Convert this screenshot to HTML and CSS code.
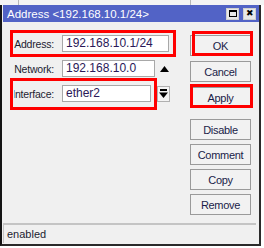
FILE: index.html
```html
<!DOCTYPE html>
<html>
<head>
<meta charset="utf-8">
<link rel="stylesheet" href="styles.css">
</head>
<body>
<div class="topstrip"><span class="tl a"></span><span class="tl b"></span></div>
<div class="window">
  <div class="titlebar">
    <span class="title">Address &lt;192.168.10.1/24&gt;</span>
    <span class="tbtn"><span class="sq"></span></span>
    <span class="tbtn x">&#x2716;</span>
  </div>
  <div class="content">
    <div class="form">
      <div class="row">
        <label class="lbl"><span>Address:</span></label>
        <div class="field w-addr">192.168.10.1/24</div>
      </div>
      <div class="row">
        <label class="lbl"><span>Network:</span></label>
        <div class="field w-net">192.168.10.0</div>
        <svg class="uparrow" width="9" height="6" viewBox="0 0 9 6"><path d="M0 6 L4.5 0 L9 6 Z" fill="#000"/></svg>
      </div>
      <div class="row">
        <label class="lbl"><span>Interface:</span></label>
        <div class="field w-if">ether2</div>
        <span class="dropbtn"><svg width="9" height="10" viewBox="0 0 9 10"><rect x="1" y="0" width="7" height="2" fill="#000"/><path d="M0 3.5 L9 3.5 L4.5 9 Z" fill="#000"/></svg></span>
      </div>
    </div>
    <div class="buttons">
      <div class="grp">
        <button class="btn">OK</button>
        <button class="btn">Cancel</button>
        <button class="btn">Apply</button>
      </div>
      <div class="grp grp2">
        <button class="btn">Disable</button>
        <button class="btn">Comment</button>
        <button class="btn">Copy</button>
        <button class="btn">Remove</button>
      </div>
    </div>
  </div>
  <div class="status"><span>enabled</span></div>
  <div class="mark m-addr"></div>
  <div class="mark m-ok"></div>
  <div class="mark m-if"></div>
  <div class="mark m-apply"></div>
</div>
</body>
</html>
```
FILE: styles.css
```css
html, body {
  margin: 0;
  padding: 0;
  background: #ffffff;
  width: 264px;
  height: 248px;
  overflow: hidden;
  font-family: "Liberation Sans", Arial, sans-serif;
}
.topstrip {
  height: 5px;
  position: relative;
  background: #f4f4f4;
}
.tl {
  position: absolute;
  top: 0;
  width: 1px;
  height: 5px;
  background: #b8b8b8;
}
.tl.a { left: 18px; }
.tl.b { left: 190px; }
.window {
  position: relative;
  width: 257px;
  height: 239px;
  border-left: 2px solid #141414;
  border-right: 2px solid #2a2a2a;
  border-bottom: 2px solid #2a2a2a;
  background: #f0f0f0;
  display: flex;
  flex-direction: column;
}
.titlebar {
  height: 17px;
  background: #5263c6;
  margin-left: 1px;
  display: flex;
  align-items: center;
  padding-right: 3px;
}
.title {
  color: #ffffff;
  font-size: 11.5px;
  padding-left: 4px;
  flex: 1;
  white-space: nowrap;
}
.tbtn {
  width: 13px;
  height: 12px;
  background: #e8e8e8;
  border: 1px solid #cfcfcf;
  box-sizing: border-box;
  margin-left: 4px;
  display: flex;
  align-items: center;
  justify-content: center;
  font-size: 9px;
  color: #000;
  line-height: 1;
}
.sq {
  width: 8px;
  height: 7px;
  border: 1px solid #000;
  border-top-width: 2px;
  box-sizing: border-box;
}
.content {
  display: flex;
  padding-top: 13px;
}
.form {
  width: 188px;
  display: flex;
  flex-direction: column;
  gap: 8px;
}
.row {
  height: 17px;
  display: flex;
  align-items: center;
}
.lbl {
  width: 40px;
  flex: none;
  margin-left: 12px;
  margin-right: 8px;
  display: flex;
  justify-content: flex-end;
  overflow: hidden;
  white-space: nowrap;
  font-size: 10.5px;
  letter-spacing: -0.2px;
  color: #1c1c30;
}
.lbl span { flex: none; }
.field {
  height: 17px;
  box-sizing: border-box;
  background: #ffffff;
  border: 1px solid #a8a8a8;
  font-size: 12px;
  line-height: 15px;
  padding-left: 3px;
  color: #2a1858;
  white-space: nowrap;
  overflow: hidden;
}
.w-addr { width: 107px; }
.w-net { width: 93px; }
.w-if { width: 89px; }
.uparrow { margin-left: 5px; }
.dropbtn {
  margin-left: 6px;
  width: 13px;
  height: 16px;
  box-sizing: border-box;
  border: 1px solid #b0b0b0;
  background: #f4f4f4;
  display: flex;
  align-items: center;
  justify-content: center;
}
.buttons {
  display: flex;
  flex-direction: column;
}
.grp {
  display: flex;
  flex-direction: column;
  gap: 5px;
}
.grp2 {
  margin-top: 11px;
  gap: 4px;
}
.btn {
  width: 61px;
  height: 21px;
  padding: 0;
  background: #f2f2f2;
  border: 1px solid #9a9a9a;
  font-family: "Liberation Sans", Arial, sans-serif;
  font-size: 11px;
  letter-spacing: -0.3px;
  color: #1a1c48;
}
.status {
  margin-top: auto;
  margin-bottom: 1px;
  margin-left: 1px;
  margin-right: 3px;
  height: 20px;
  border-top: 2px solid #c4c4c4;
  border-left: 1px solid #c4c4c4;
  box-sizing: border-box;
  background: #f0f0f0;
  display: flex;
  align-items: center;
  padding-left: 3px;
  font-size: 11px;
  color: #1c1c30;
}
.mark {
  position: absolute;
  border: 3px solid #ff0000;
  box-sizing: border-box;
}
.m-addr { left: 8px; top: 25px; width: 166px; height: 27px; }
.m-ok { left: 190px; top: 26px; width: 61px; height: 25px; }
.m-if { left: 8px; top: 73px; width: 147px; height: 32px; }
.m-apply { left: 188px; top: 79px; width: 63px; height: 24px; }
```
